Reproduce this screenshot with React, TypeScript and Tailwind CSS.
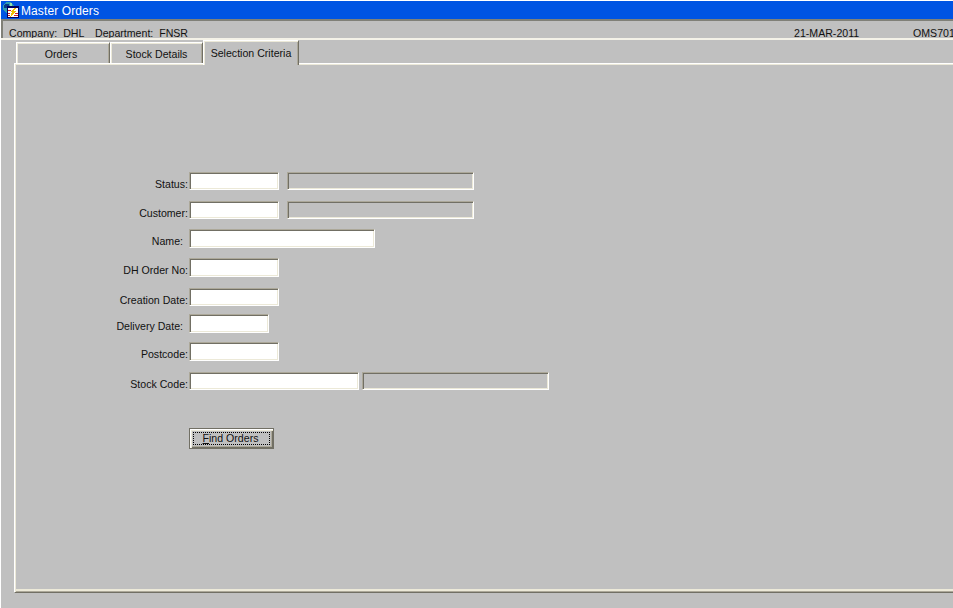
import type { ReactNode } from "react";

const font = "font-['Liberation_Sans',Arial,sans-serif]";

function AppIcon() {
  return (
    <svg width="16" height="16" viewBox="0 0 16 16" className="shrink-0" shapeRendering="crispEdges" aria-hidden="true">
      <circle cx="5.5" cy="5.5" r="5.5" fill="#2f9faf" />
      <path d="M2 2h4v2H4v2H1V3z" fill="#0a3a8a" />
      <path d="M7 1h2v3H7z" fill="#8fe0b0" />
      <rect x="4" y="4" width="12" height="12" fill="#000060" />
      <rect x="5" y="6" width="10" height="9" fill="#ffffff" />
      <path d="M11 6L7 10h2l-2 5 6-6h-2l2-3z" fill="#f0c000" />
      <path d="M5 8h3v1H5zM5 11h2v1H5zM5 13h2v1H5zM12 11h3v1h-3zM11 13h4v1h-4z" fill="#d02020" />
    </svg>
  );
}

function Field({ w, h, disabled = false }: { w: string; h: string; disabled?: boolean }) {
  return (
    <div
      className={`border border-t-[#aca899] border-l-[#aca899] border-r-white border-b-white shadow-[inset_1px_1px_0_#716f64,inset_-1px_-1px_0_#ece9d8] ${w} ${h} ${
        disabled ? "bg-[#c0c0c0]" : "bg-white"
      }`}
    />
  );
}

function Row({ label, top, pr = "pr-[1px]", children }: { label: string; top: string; pr?: string; children: ReactNode }) {
  return (
    <div className={`flex ${top}`}>
      <div className={`h-[18px] w-[173px] shrink-0 pt-[6px] text-right text-[10.6px] leading-[12px] text-[#111] ${pr}`}>{label}</div>
      <div className="flex gap-[8px]">{children}</div>
    </div>
  );
}

function Tab({ label, w, pad = "", active = false }: { label: string; w: string; pad?: string; active?: boolean }) {
  return (
    <div
      className={`flex items-center justify-center border-l border-t border-r border-l-white border-t-white border-r-[#716f64] shadow-[inset_1px_1px_0_#ece9d8,inset_-1px_0_0_#aca899] text-[10.6px] text-[#111] ${w} ${pad} ${
        active ? "relative z-10 -mb-[2px] h-[25px] bg-[#c0c0c0] pt-[1px]" : "h-[21px] pt-[3px]"
      }`}
    >
      {label}
    </div>
  );
}

export default function App() {
  return (
    <div className={`flex h-[608px] w-[953px] flex-col overflow-hidden border-l border-t border-white bg-[#c0c0c0] ${font}`}>
      <div className="flex h-[18px] shrink-0 items-center gap-[2px] bg-[#0054e3] pl-[2px] text-[12px] text-white">
        <AppIcon />
        <span className="pt-[1px] tracking-[0.1px]">Master Orders</span>
      </div>

      <div className="flex h-[19px] shrink-0 border-l-2 border-t-2 border-l-[#808078] border-t-[#808078] pl-[6px] pt-[6px] text-[10.6px] leading-[13px] text-[#111]">
        <span className="w-[86px] shrink-0 whitespace-pre">Company:  DHL</span>
        <span className="w-[699px] shrink-0 whitespace-pre">Department:  FNSR</span>
        <span className="w-[119px] shrink-0">21-MAR-2011</span>
        <span className="shrink-0 whitespace-nowrap">OMS701</span>
      </div>
      <div className="h-[2px] shrink-0 bg-[#f4f2e8]" />

      <div className="flex h-[23px] shrink-0 items-end pl-[15px]">
        <Tab label="Orders" w="w-[94px]" pad="pr-[4px]" />
        <Tab label="Stock Details" w="w-[93px]" />
        <Tab label="Selection Criteria" w="w-[96px]" active />
      </div>

      <div className="ml-[13px] mr-[-4px] h-[530px] shrink-0 border-b border-l border-t border-b-[#716f64] border-l-white border-t-white shadow-[inset_1px_1px_0_#ece9d8,inset_0_-1px_0_#aca899,inset_0_-3px_0_#ece9d8]">
        <div className="flex flex-col pl-[1px] pt-[108px]">
          <Row label="Status:" top="">
            <Field w="w-[90px]" h="h-[18px]" />
            <Field w="w-[187px]" h="h-[18px]" disabled />
          </Row>
          <Row label="Customer:" top="mt-[11px]">
            <Field w="w-[90px]" h="h-[18px]" />
            <Field w="w-[187px]" h="h-[18px]" disabled />
          </Row>
          <Row label="Name:" pr="pr-[6px]" top="mt-[10px]">
            <Field w="w-[186px]" h="h-[19px]" />
          </Row>
          <Row label="DH Order No:" top="mt-[10px]">
            <Field w="w-[90px]" h="h-[19px]" />
          </Row>
          <Row label="Creation Date:" top="mt-[11px]">
            <Field w="w-[90px]" h="h-[18px]" />
          </Row>
          <Row label="Delivery Date:" pr="pr-[6px]" top="mt-[8px]">
            <Field w="w-[80px]" h="h-[19px]" />
          </Row>
          <Row label="Postcode:" top="mt-[9px]">
            <Field w="w-[90px]" h="h-[19px]" />
          </Row>
          <Row label="Stock Code:" top="mt-[11px]">
            <div className="flex gap-[3px]">
              <Field w="w-[170px]" h="h-[18px]" />
              <Field w="w-[187px]" h="h-[18px]" disabled />
            </div>
          </Row>
          <div className="ml-[173px] mt-[38px] flex h-[21px] w-[85px] border border-[#716f64] p-[3px] shadow-[inset_1px_1px_0_#ffffff,inset_2px_2px_0_#ece9d8,inset_-1px_-1px_0_#716f64,inset_-2px_-2px_0_#aca899]">
            <div className="flex h-full w-full items-center justify-center border border-dotted border-black pr-[2px] text-[10.6px] leading-[13px] text-[#111]">
              <span>
                <u>F</u>ind Orders
              </span>
            </div>
          </div>
        </div>
      </div>
    </div>
  );
}
